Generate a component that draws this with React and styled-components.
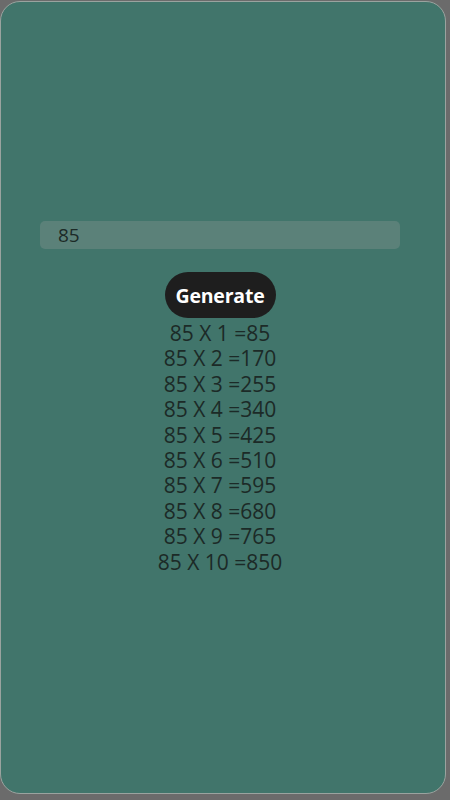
import { useState } from "react";
import styled, { createGlobalStyle } from "styled-components";

const GlobalStyle = createGlobalStyle`
  body {
    margin: 0;
    background: #6b6b6b;
    font-family: "Open Sans", "Noto Sans", sans-serif;
  }
`

const Card = styled.div`
  box-sizing: border-box;
  width: 446px;
  height: 793px;
  margin-top: 1px;
  border: 1px solid #9aa39f;
  border-radius: 20px;
  background: #41756b;
  padding-top: 219px;
`

const Column = styled.div`
  width: 360px;
  margin-left: 39px;
  display: flex;
  flex-direction: column;
  align-items: center;
`

const NumberInput = styled.input`
  box-sizing: border-box;
  width: 360px;
  height: 28px;
  border: none;
  outline: none;
  border-radius: 5px;
  background: #5b8179;
  padding: 0 0 0 18px;
  font-family: inherit;
  font-size: 19px;
  color: #1c2a27;
`

const GenerateButton = styled.button`
  margin-top: 23px;
  height: 46px;
  padding: 0 11px;
  border: none;
  border-radius: 23px;
  background: #1e1e1e;
  color: #fff;
  font-family: inherit;
  font-weight: 700;
  font-size: 19.5px;
  letter-spacing: -0.2px;
  cursor: pointer;
`

const Table = styled.div`
  margin-top: 3px;
  display: flex;
  flex-direction: column;
  align-items: center;
`

const Line = styled.div`
  font-size: 21px;
  line-height: 25.4px;
  color: #1c2a27;
`

export default function App() {
  const [value, setValue] = useState("85")
  const [num, setNum] = useState(85)

  const rows = Array.from({ length: 10 }, (_, i) => i + 1)

  return (
    <>
      <GlobalStyle />
      <Card>
        <Column>
          <NumberInput value={value} onChange={e => setValue(e.target.value)} />
          <GenerateButton onClick={() => setNum(Number(value))}>Generate</GenerateButton>
          <Table>
            {rows.map(i => (
              <Line key={i}>{num} X {i} ={num * i}</Line>
            ))}
          </Table>
        </Column>
      </Card>
    </>
  )
}
